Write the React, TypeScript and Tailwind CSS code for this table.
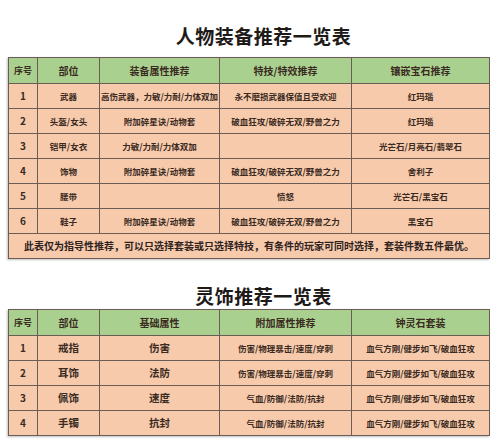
import React from "react";

const cols = ["w-[29px]", "w-[62px]", "w-[120px]", "w-[132px]", "w-[138px]"];

const gear = [
  ["1", "武器", "高伤武器，力敏/力耐/力体双加", "永不磨损武器保值且受欢迎", "红玛瑙"],
  ["2", "头盔/女头", "附加碎星诀/动物套", "破血狂攻/破碎无双/野兽之力", "红玛瑙"],
  ["3", "铠甲/女衣", "力敏/力耐/力体双加", "", "光芒石/月亮石/翡翠石"],
  ["4", "饰物", "附加碎星诀/动物套", "破血狂攻/破碎无双/野兽之力", "舍利子"],
  ["5", "腰带", "", "愤怒", "光芒石/黑宝石"],
  ["6", "鞋子", "附加碎星诀/动物套", "破血狂攻/破碎无双/野兽之力", "黑宝石"],
];

const ling = [
  ["1", "戒指", "伤害", "伤害/物理暴击/速度/穿刺", "血气方刚/健步如飞/破血狂攻"],
  ["2", "耳饰", "法防", "伤害/物理暴击/速度/穿刺", "血气方刚/健步如飞/破血狂攻"],
  ["3", "佩饰", "速度", "气血/防御/法防/抗封", "血气方刚/健步如飞/破血狂攻"],
  ["4", "手镯", "抗封", "气血/防御/法防/抗封", "血气方刚/健步如飞/破血狂攻"],
];

function Title({ text }: { text: string }) {
  return (
    <div className="w-[481px] pl-[30px] h-[24px] flex items-center justify-center text-[19px] font-bold text-[#1e1a18] tracking-[0.5px]">
      {text}
    </div>
  );
}

function Head({ labels }: { labels: string[] }) {
  return (
    <tr className="bg-[#a9d08e] h-[26px]">
      {labels.map((l, i) => (
        <th
          key={i}
          className={`${cols[i]} border border-[#6b5d55] font-bold text-[#3a2a22] ${i === 0 ? "text-[9px]" : "text-[10px]"}`}
        >
          {l}
        </th>
      ))}
    </tr>
  );
}

export default function App() {
  return (
    <div
      className="w-[500px] h-[446px] bg-white overflow-hidden"
      style={{ fontFamily: '"Noto Sans CJK SC", "Noto Sans", sans-serif' }}
    >
      <div className="pl-[8px] pt-[24px]">
        <Title text="人物装备推荐一览表" />
        <table className="mt-[9px] w-[481px] border-collapse table-fixed shadow-[-1px_1px_2px_rgba(0,0,0,0.25)]">
          <thead>
            <Head labels={["序号", "部位", "装备属性推荐", "特技/特效推荐", "镶嵌宝石推荐"]} />
          </thead>
          <tbody>
            {gear.map((r, ri) => (
              <tr key={ri} className="bg-[#f7caac] h-[25px]">
                {r.map((c, ci) => (
                  <td
                    key={ci}
                    className={`border border-[#6b5d55] text-center font-bold text-[#3a2a22] leading-none ${ci === 0 ? "text-[10px]" : "text-[8.5px]"}`}
                  >
                    {c}
                  </td>
                ))}
              </tr>
            ))}
            <tr className="bg-[#f7caac] h-[25px]">
              <td colSpan={5} className="border border-[#6b5d55] text-center font-bold text-[10px] text-[#2e221c] leading-none">
                此表仅为指导性推荐，可以只选择套装或只选择特技，有条件的玩家可同时选择，套装件数五件最优。
              </td>
            </tr>
          </tbody>
        </table>

        <div className="mt-[25px]">
          <Title text="灵饰推荐一览表" />
        </div>
        <table className="mt-[1px] w-[481px] border-collapse table-fixed shadow-[-1px_1px_2px_rgba(0,0,0,0.25)]">
          <thead>
            <Head labels={["序号", "部位", "基础属性", "附加属性推荐", "钟灵石套装"]} />
          </thead>
          <tbody>
            {ling.map((r, ri) => (
              <tr key={ri} className="bg-[#f7caac] h-[25px]">
                {r.map((c, ci) => (
                  <td
                    key={ci}
                    className={`border border-[#6b5d55] text-center font-bold text-[#3a2a22] leading-none ${ci === 0 ? "text-[10px]" : ci < 3 ? "text-[10.5px]" : "text-[8.5px]"}`}
                  >
                    {c}
                  </td>
                ))}
              </tr>
            ))}
          </tbody>
        </table>
      </div>
    </div>
  );
}
